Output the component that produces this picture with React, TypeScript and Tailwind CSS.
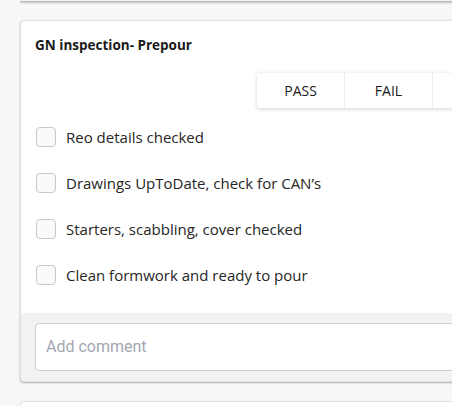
import React from "react";

const items = [
  "Reo details checked",
  "Drawings UpToDate, check for CAN’s",
  "Starters, scabbling, cover checked",
  "Clean formwork and ready to pour",
];

export default function App() {
  return (
    <div className="w-[452px] h-[406px] overflow-hidden bg-[#f7f7f7] pl-[20px]" style={{ fontFamily: '"Open Sans", "Noto Sans", sans-serif' }}>
      <div className="w-[500px] h-[2px] bg-[#f2f2f2] border-b border-[#bdbdbd] rounded-b-[3px] shadow-[0_1px_2px_rgba(0,0,0,0.25)]" />
      <div className="mt-[18px] w-[500px] bg-white border border-[#e0e0e0] rounded-[4px] shadow-[0_1px_2px_rgba(0,0,0,0.3)] overflow-hidden">
        <div className="pt-[14px] pl-[14px] h-[35px] text-[13.5px] leading-[20px] font-bold text-[#1a1a1a]">
          GN inspection- Prepour
        </div>
        <div className="mt-[17px] ml-[236px] flex h-[35px] bg-white shadow-[0_1px_4px_rgba(0,0,0,0.18)] rounded-[2px]">
          <div className="w-[88px] flex items-center justify-center text-[14px] text-[#1a1a1a]">PASS</div>
          <div className="w-[88px] flex items-center justify-center text-[14px] text-[#1a1a1a] border-l border-[#ececec]">FAIL</div>
          <div className="w-[88px] border-l border-[#ececec]" />
        </div>
        <div className="mt-[6px] pb-[15px]">
          {items.map((t) => (
            <div key={t} className="h-[46px] flex items-center pl-[15px]">
              <div className="w-[20px] h-[20px] rounded-[4px] border border-[#c8c8c8] bg-[#f9fafb]" />
              <span className="ml-[10px] text-[15px] leading-[22px] text-[#262626]">{t}</span>
            </div>
          ))}
        </div>
        <div className="bg-[#f2f2f2] pt-[10px] pb-[10px] pl-[14px]">
          <div className="h-[48px] rounded-[4px] border border-[#cfcfcf] bg-white flex items-center pl-[10px]">
            <span className="text-[16px] text-[#a3a6b1]" style={{ fontFamily: 'Roboto, sans-serif' }}>Add comment</span>
          </div>
        </div>
      </div>
      <div className="mt-[19px] w-[500px] h-[40px] bg-white border border-[#e0e0e0] rounded-[4px]" />
    </div>
  );
}
